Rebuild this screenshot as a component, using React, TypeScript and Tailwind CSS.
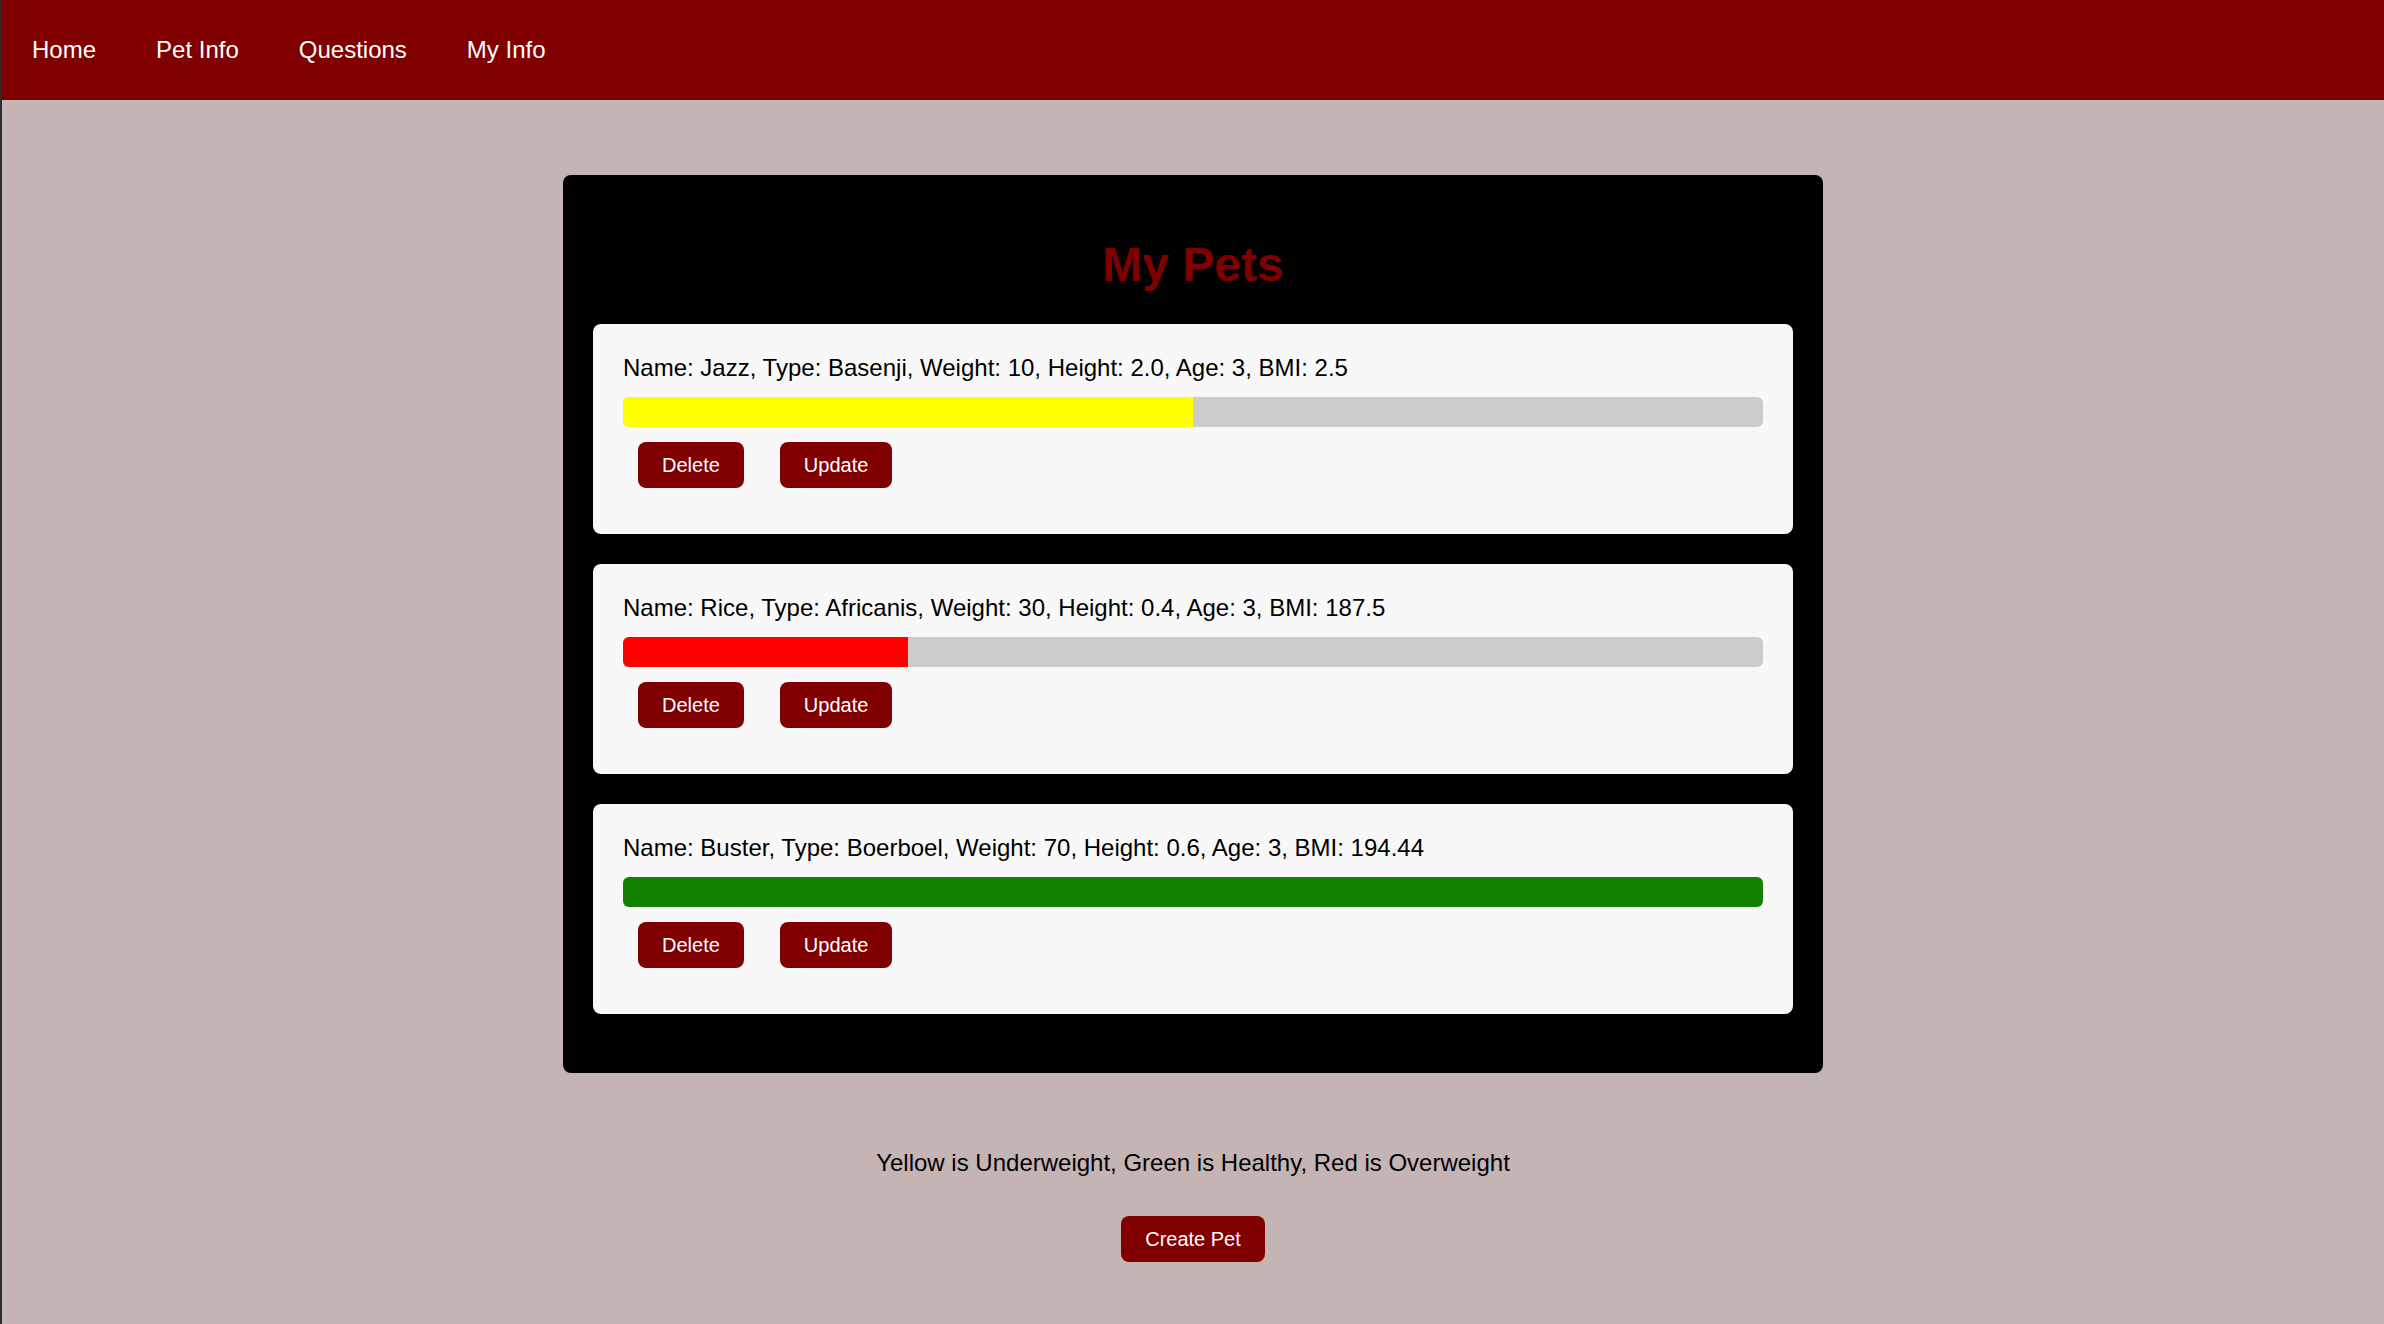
import React from 'react';

type Pet = {
  name: string;
  type: string;
  weight: number;
  height: string;
  age: number;
  bmi: string;
  pct: number;
  color: string;
};

const pets: Pet[] = [
  { name: 'Jazz', type: 'Basenji', weight: 10, height: '2.0', age: 3, bmi: '2.5', pct: 50, color: '#ffff00' },
  { name: 'Rice', type: 'Africanis', weight: 30, height: '0.4', age: 3, bmi: '187.5', pct: 25, color: '#ff0000' },
  { name: 'Buster', type: 'Boerboel', weight: 70, height: '0.6', age: 3, bmi: '194.44', pct: 100, color: '#138000' },
];

const navLinks = ['Home', 'Pet Info', 'Questions', 'My Info'];

const PetCard: React.FC<{ pet: Pet }> = ({ pet }) => {
  return (
    <div className="bg-[#f8f8f8] rounded-[8px] p-[30px]">
      <p className="text-[24px] leading-[28px] text-black">
        Name: {pet.name}, Type: {pet.type}, Weight: {pet.weight}, Height: {pet.height}, Age: {pet.age}, BMI: {pet.bmi}
      </p>

      {/* BMI bar */}
      <div className="mt-[15px] h-[30px] w-full bg-[#cccccc] rounded-[6px] overflow-hidden">
        <div className="h-full" style={{ width: `${pet.pct}%`, backgroundColor: pet.color }}></div>
      </div>

      <div className="mt-[15px] mb-[16px] flex gap-[36px] px-[15px]">
        <button className="h-[46px] px-[24px] bg-[#800000] text-white text-[20px] leading-[23px] rounded-[8px]">
          Delete
        </button>
        <button className="h-[46px] px-[24px] bg-[#800000] text-white text-[20px] leading-[23px] rounded-[8px]">
          Update
        </button>
      </div>
    </div>
  );
};

const App: React.FC = () => {
  return (
    <div className="min-h-screen bg-[#c4b4b4] border-l-2 border-[#2b2b2b] font-['Liberation_Sans',Arial,sans-serif]">
      <nav className="h-[100px] bg-[#800000] flex items-center">
        {navLinks.map((link) => (
          <a key={link} href="#" className="px-[30px] text-white text-[24px] leading-[28px]">
            {link}
          </a>
        ))}
      </nav>

      <div className="mx-auto mt-[75px] w-[1260px] bg-black rounded-[8px] px-[30px] pt-[30px] pb-[59px]">
        <h1 className="mt-[32px] mb-[32px] text-center text-[48px] leading-[55px] font-bold text-[#800000]">
          My Pets
        </h1>
        <div className="flex flex-col gap-[30px]">
          {pets.map((pet) => (
            <PetCard key={pet.name} pet={pet} />
          ))}
        </div>
      </div>

      <p className="mt-[76px] text-center text-[24px] leading-[28px] text-black">
        Yellow is Underweight, Green is Healthy, Red is Overweight
      </p>
      <div className="mt-[39px] flex justify-center">
        <button className="h-[46px] px-[24px] bg-[#800000] text-white text-[20px] leading-[23px] rounded-[8px]">
          Create Pet
        </button>
      </div>
    </div>
  );
};

export default App;
